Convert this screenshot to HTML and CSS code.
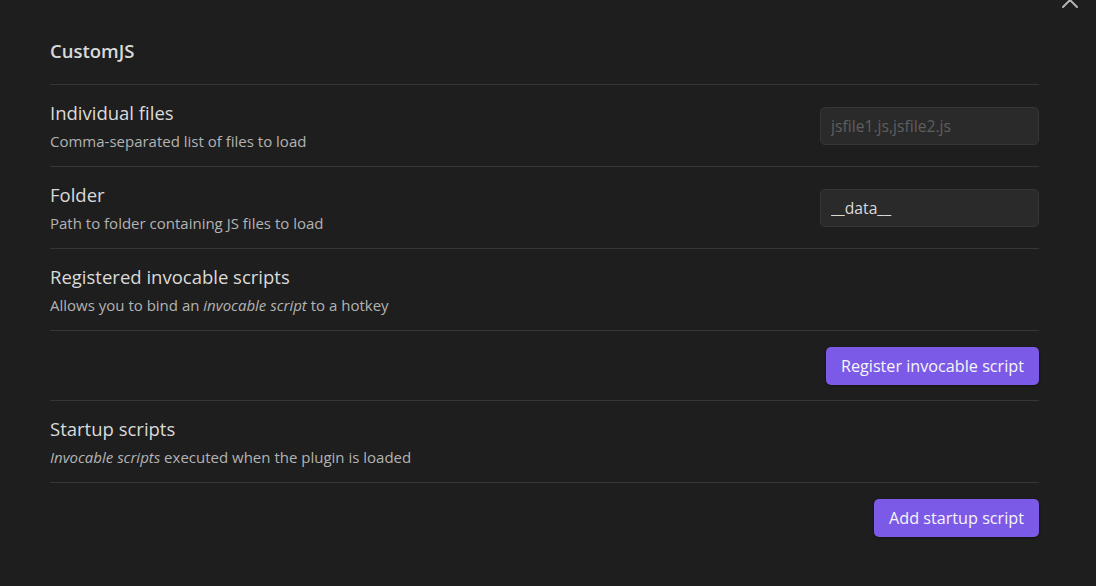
FILE: index.html
```html
<!DOCTYPE html>
<html>
<head>
<meta charset="utf-8">
<link rel="stylesheet" href="styles.css">
</head>
<body>
<div class="modal">
  <button class="close" aria-label="Close">
    <svg width="18" height="18" viewBox="0 0 18 18"><path d="M2 2L16 16M16 2L2 16" stroke="#b3b3b3" stroke-width="2" stroke-linecap="round"/></svg>
  </button>
  <div class="content">
    <h2 class="title">CustomJS</h2>
    <div class="item">
      <div class="info">
        <div class="name">Individual files</div>
        <div class="desc">Comma-separated list of files to load</div>
      </div>
      <input class="field" type="text" placeholder="jsfile1.js,jsfile2.js">
    </div>
    <div class="item">
      <div class="info">
        <div class="name">Folder</div>
        <div class="desc">Path to folder containing JS files to load</div>
      </div>
      <input class="field" type="text" value="__data__">
    </div>
    <div class="item">
      <div class="info">
        <div class="name">Registered invocable scripts</div>
        <div class="desc">Allows you to bind an <em>invocable script</em> to a hotkey</div>
      </div>
    </div>
    <div class="item item-btn">
      <button class="cta">Register invocable script</button>
    </div>
    <div class="item">
      <div class="info">
        <div class="name">Startup scripts</div>
        <div class="desc"><em>Invocable scripts</em> executed when the plugin is loaded</div>
      </div>
    </div>
    <div class="item item-btn item-last">
      <button class="cta">Add startup script</button>
    </div>
  </div>
</div>
</body>
</html>
```
FILE: styles.css
```css
html, body {
  margin: 0;
  padding: 0;
  background: #1e1e1e;
  width: 1096px;
  height: 586px;
  overflow: hidden;
}
body {
  font-family: "Open Sans", "Noto Sans", sans-serif;
  color: #dadada;
}
.modal {
  position: relative;
  height: 586px;
}
.close {
  position: absolute;
  top: -9px;
  left: 1061px;
  background: none;
  border: 0;
  padding: 0;
  width: 18px;
  height: 18px;
  display: flex;
}
.content {
  padding: 38px 57px 0 50px;
}
.title {
  margin: 0;
  font-size: 18.5px;
  font-weight: 600;
  color: #dadada;
  line-height: 26px;
  padding-bottom: 20px;
  border-bottom: 1px solid #363636;
}
.item {
  display: flex;
  align-items: center;
  justify-content: space-between;
  height: 81px;
  border-bottom: 1px solid #363636;
}
.item-btn {
  height: 69px;
  justify-content: flex-end;
}
.item-last {
  border-bottom: 0;
}
.info {
  display: flex;
  flex-direction: column;
  gap: 5px;
  margin-top: 1px;
}
.name {
  font-size: 18.5px;
  line-height: 24px;
  color: #dadada;
}
.desc {
  font-size: 15px;
  line-height: 22px;
  color: #b3b3b3;
}
.desc em {
  font-style: italic;
}
.field {
  box-sizing: border-box;
  width: 219px;
  height: 38px;
  background: #2a2a2a;
  border: 1px solid #363636;
  border-radius: 5px;
  padding: 0 10px;
  font-family: inherit;
  font-size: 15.7px;
  color: #dadada;
  outline: none;
}
.field::placeholder {
  color: #5f5f5f;
}
.cta {
  height: 38px;
  padding: 0 15px;
  background: #7c5ae8;
  color: #f6f6f6;
  border: 0;
  border-radius: 5px;
  font-family: inherit;
  font-size: 16.2px;
  box-shadow: 0 1px 3px rgba(0,0,0,0.4);
}
```
